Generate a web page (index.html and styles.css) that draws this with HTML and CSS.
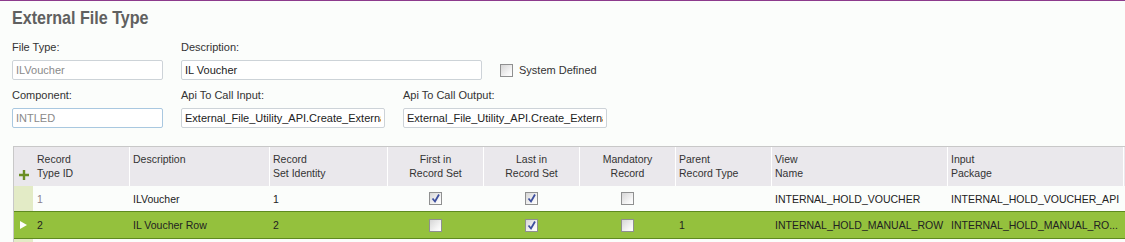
FILE: index.html
```html
<!DOCTYPE html>
<html lang="en">
<head>
    <meta charset="UTF-8">
    <title>External File Type</title>
    <link rel="stylesheet" href="styles.css">
</head>
<body>
    <h1 class="page-title"><span>External File Type</span></h1>

    <div class="form">
        <div class="form-row">
            <div class="field w-small">
                <label>File Type:</label>
                <input type="text" class="input input-readonly" value="ILVoucher" readonly>
            </div>
            <div class="field w-wide">
                <label>Description:</label>
                <input type="text" class="input" value="IL Voucher" readonly>
            </div>
            <div class="check-field">
                <span class="checkbox"></span>
                <span>System Defined</span>
            </div>
        </div>
        <div class="form-row">
            <div class="field w-small">
                <label>Component:</label>
                <input type="text" class="input input-readonly input-focus" value="INTLED" readonly>
            </div>
            <div class="field w-api">
                <label>Api To Call Input:</label>
                <input type="text" class="input" value="External_File_Utility_API.Create_External_File_Input" readonly>
            </div>
            <div class="field w-api">
                <label>Api To Call Output:</label>
                <input type="text" class="input" value="External_File_Utility_API.Create_External_File_Output" readonly>
            </div>
        </div>
    </div>

    <div class="grid">
        <div class="grid-row grid-head">
            <div class="cell sel">
                <svg width="10" height="10" viewBox="0 0 10 10"><path d="M5 0v10M0 5h10" stroke="#6b8e23" stroke-width="2.4"/></svg>
            </div>
            <div class="cell first">Record<br>Type ID</div>
            <div class="cell">Description</div>
            <div class="cell">Record<br>Set Identity</div>
            <div class="cell center">First in<br>Record Set</div>
            <div class="cell center">Last in<br>Record Set</div>
            <div class="cell center">Mandatory<br>Record</div>
            <div class="cell">Parent<br>Record Type</div>
            <div class="cell">View<br>Name</div>
            <div class="cell">Input<br>Package</div>
            <div class="cell"></div>
        </div>

        <div class="grid-row">
            <div class="cell sel"></div>
            <div class="cell muted">1</div>
            <div class="cell">ILVoucher</div>
            <div class="cell">1</div>
            <div class="cell center"><span class="checkbox checked"><svg width="11" height="11" viewBox="0 0 11 11"><path d="M2.5 5.5l2.5 3 4-7" stroke="#3d4f9e" stroke-width="1.8" fill="none"/></svg></span></div>
            <div class="cell center"><span class="checkbox checked"><svg width="11" height="11" viewBox="0 0 11 11"><path d="M2.5 5.5l2.5 3 4-7" stroke="#3d4f9e" stroke-width="1.8" fill="none"/></svg></span></div>
            <div class="cell center"><span class="checkbox"></span></div>
            <div class="cell"></div>
            <div class="cell">INTERNAL_HOLD_VOUCHER</div>
            <div class="cell">INTERNAL_HOLD_VOUCHER_API</div>
            <div class="cell"></div>
        </div>

        <div class="grid-row selected">
            <div class="cell sel">
                <svg width="7" height="8" viewBox="0 0 7 8"><path d="M0 0L7 4L0 8Z" fill="#fff"/></svg>
            </div>
            <div class="cell">2</div>
            <div class="cell">IL Voucher Row</div>
            <div class="cell">2</div>
            <div class="cell center"><span class="checkbox"></span></div>
            <div class="cell center"><span class="checkbox checked"><svg width="11" height="11" viewBox="0 0 11 11"><path d="M2.5 5.5l2.5 3 4-7" stroke="#3d4f9e" stroke-width="1.8" fill="none"/></svg></span></div>
            <div class="cell center"><span class="checkbox"></span></div>
            <div class="cell">1</div>
            <div class="cell">INTERNAL_HOLD_MANUAL_ROW</div>
            <div class="cell">INTERNAL_HOLD_MANUAL_RO...</div>
            <div class="cell"></div>
        </div>

        <div class="grid-row">
            <div class="cell sel"></div>
        </div>
    </div>
</body>
</html>
```

FILE: styles.css
```css
body {
    margin: 0;
    width: 1125px;
    height: 242px;
    overflow: hidden;
    background: #fbfdfb;
    border-top: 1px solid #8c3b8c;
    box-sizing: border-box;
    font-family: "Liberation Sans", Arial, sans-serif;
    font-size: 11px;
    color: #333;
}
.page-title {
    margin: 0;
    padding: 5px 0 0 12px;
    height: 29px;
    box-sizing: border-box;
    font-family: "Liberation Sans", Arial, sans-serif;
    font-weight: bold;
    font-size: 18.5px;
    line-height: 24px;
    color: #606060;
}
.page-title span {
    display: inline-block;
    transform: scaleX(0.87);
    transform-origin: left center;
}
.form {
    padding: 9px 0 0 12px;
}
.form-row {
    display: flex;
    gap: 18px;
    margin-bottom: 7px;
}
.field label {
    display: block;
    height: 16px;
    line-height: 16px;
    margin-bottom: 5px;
    color: #333;
}
.w-small { width: 151px; }
.w-wide { width: 301px; }
.w-api { width: 204px; }
.input {
    display: block;
    width: 100%;
    height: 20px;
    box-sizing: border-box;
    margin: 0;
    padding: 0 3px;
    border: 1px solid #cdd3d8;
    border-radius: 2px;
    background: #fff;
    font-family: "Liberation Sans", Arial, sans-serif;
    font-size: 11px;
    color: #222;
    outline: none;
}
.input-readonly {
    color: #8a8a8a;
}
.input-focus {
    border-color: #a9c8e0;
}
.check-field {
    display: flex;
    align-items: center;
    gap: 6px;
    margin-top: 25px;
    height: 12px;
    color: #333;
}
.checkbox {
    display: inline-flex;
    align-items: center;
    justify-content: center;
    width: 13px;
    height: 13px;
    box-sizing: border-box;
    border: 1px solid #8f9090;
    background: linear-gradient(135deg, #d6d6d6, #f6f6f6 70%, #fff);
}

/* grid */
.grid {
    margin: 18px 0 0 13px;
    border-left: 1px solid #c8c8c8;
    border-top: 1px solid #c8c8c8;
    font-size: 10.5px;
    color: #222;
}
.grid-row {
    display: grid;
    grid-template-columns: 19px 96px 140px 118px 96px 96px 96px 96px 176px 176px 100px;
    height: 25px;
    align-items: center;
}
.grid-row .cell {
    padding-left: 4px;
    white-space: nowrap;
    overflow: hidden;
}
.grid-row .cell.sel {
    padding: 0;
    height: 100%;
    display: flex;
    align-items: center;
    justify-content: center;
    background: #e3ebc6;
}
.grid-row .cell.center {
    padding: 0;
    display: flex;
    justify-content: center;
}
.grid-head {
    height: 39px;
    align-items: stretch;
    background: #eae8ec;
    color: #333;
}
.grid-head .cell {
    padding: 5px 0 0 3px;
    line-height: 14px;
    border-left: 1px solid #fff;
}
.grid-head .cell.first {
    border-left: none;
    padding-left: 4px;
}
.grid-head .cell.sel {
    background: none;
    border-left: none;
    padding-top: 8px;
}
.grid-head .cell.center {
    padding: 5px 0 0 0;
    display: block;
    text-align: center;
}
.muted {
    color: #8a7f8e;
}
.selected {
    height: 28px;
    background: #94c13d;
    border-top: 1px solid #5e8a1f;
    border-bottom: 1px solid #5e8a1f;
    box-sizing: border-box;
}
.selected .cell.sel {
    background: #94c13d;
}
```
